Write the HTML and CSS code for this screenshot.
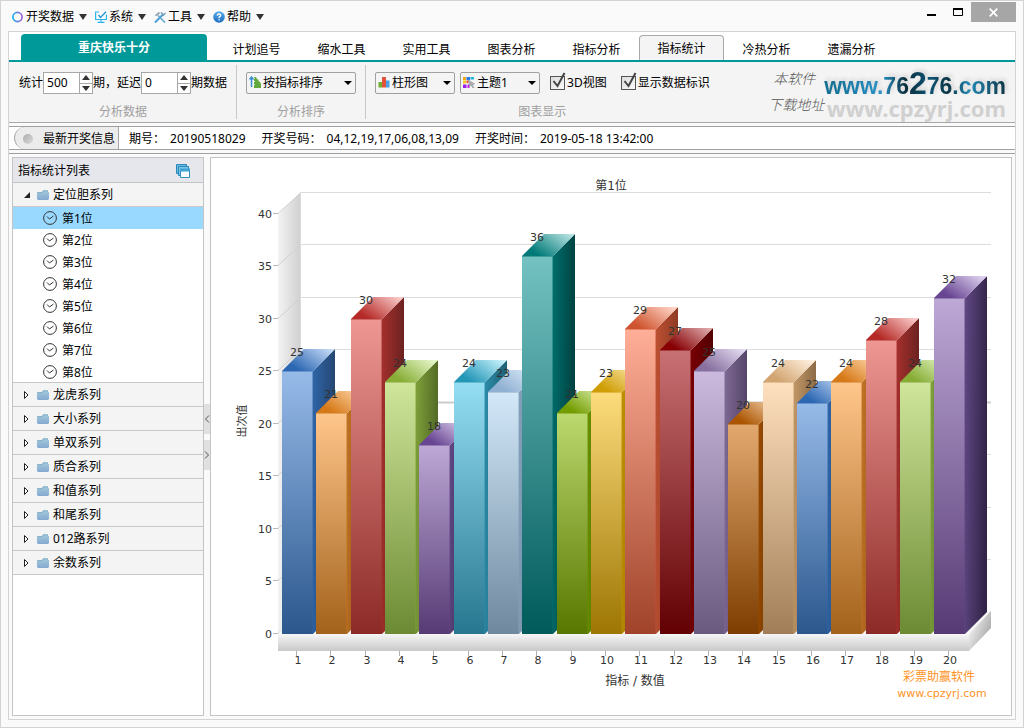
FILE: index.html
```
<!DOCTYPE html>
<html lang="zh-CN">
<head>
<meta charset="utf-8">
<title>重庆快乐十分 - 指标统计</title>
<link rel="stylesheet" href="styles.css">
</head>
<body>
<svg class="defs" width="0" height="0" aria-hidden="true">
  <defs>
    <linearGradient id="ring" x1="0" x2="1"><stop offset="0" stop-color="#1bb0f0"/><stop offset="1" stop-color="#a25cd8"/></linearGradient>
    <linearGradient id="folderFill" x1="0" y1="0" x2="0" y2="1"><stop offset="0" stop-color="#a9cbdc"/><stop offset="1" stop-color="#83a9d0"/></linearGradient>
    <linearGradient id="helpFill" x1="0" y1="0" x2="0" y2="1"><stop offset="0" stop-color="#5aaeea"/><stop offset="1" stop-color="#1c6bc0"/></linearGradient>
    <symbol id="folder" viewBox="0 0 12 10"><path d="M0 2H5L6 0H11V2H12V9L11 10H1L0 9Z" fill="url(#folderFill)"/><path d="M.5 2.500H5.500L6.500 1H11" fill="none" stroke="#7db0c8" stroke-width=".8"/></symbol>
    <symbol id="clock" viewBox="0 0 14 14"><circle cx="7" cy="7" r="6.400" fill="none" stroke="#333" stroke-width="1"/><path d="M4 5.500L6.500 8L10.500 5" fill="none" stroke="#333" stroke-width="1"/></symbol>
  </defs>
</svg>
<div class="window">
  <header class="titlebar">
    <nav class="menu">
      <button class="menu-item" type="button"><svg viewBox="0 0 12 12"><circle cx="5.500" cy="6" r="4.600" fill="none" stroke="url(#ring)" stroke-width="1.700"/></svg>开奖数据<i class="caret"></i></button>
      <button class="menu-item" type="button"><svg viewBox="0 0 12 12"><path d="M4 1H.6v7.500h10.800V3.500M6 8.500V11M2.500 11.300h7" fill="none" stroke="#2db3ee" stroke-width="1.200"/><path d="M3.500 4l2 2.500L11 .8" fill="none" stroke="#2196d6" stroke-width="1.300"/></svg>系统<i class="caret"></i></button>
      <button class="menu-item" type="button"><svg viewBox="0 0 12 12"><path d="M1 11.500L9 3.500" stroke="#4a9fd8" stroke-width="2"/><path d="M7 1.500l2.500 2.500L11.500 2" fill="none" stroke="#7d9cb5" stroke-width="1.500"/><path d="M4 4.500l7 7" stroke="#6aa9d2" stroke-width="1.700"/><path d="M.5 4.500L4.500 1l2 1-3.500 3z" fill="#9aa6b0"/></svg>工具<i class="caret"></i></button>
      <button class="menu-item" type="button"><svg viewBox="0 0 12 12"><circle cx="6" cy="6" r="5.800" fill="url(#helpFill)"/><path d="M4.300 4.700Q4.400 3 6 3t1.700 1.500Q7.700 5.500 6.100 6.200V7.300M6.100 8.300v1.300" fill="none" stroke="#fff" stroke-width="1.300"/></svg>帮助<i class="caret"></i></button>
    </nav>
    <div class="window-buttons">
      <button type="button" aria-label="最小化"><svg width="10" height="10" viewBox="0 0 10 10"><path d="M1 8h9" stroke="#000" stroke-width="2"/></svg></button>
      <button type="button" aria-label="最大化"><svg width="10" height="8" viewBox="0 0 10 8"><path d="M.5 1v6.500h9V1" fill="none" stroke="#000"/><path d="M0 1h10" stroke="#000" stroke-width="2"/></svg></button>
      <button class="close" type="button" aria-label="关闭"><svg width="9" height="9" viewBox="0 0 9 9"><path d="M.7.7l7.600 7.600M8.300.7L.7 8.300" stroke="#fff" stroke-width="1.700"/></svg></button>
    </div>
  </header>
  <main class="frame">
    <nav class="tabs">
      <a class="tab-main" href="#">重庆快乐十分</a>
      <a class="tab" href="#">计划追号</a>
      <a class="tab" href="#">缩水工具</a>
      <a class="tab" href="#">实用工具</a>
      <a class="tab" href="#">图表分析</a>
      <a class="tab" href="#">指标分析</a>
      <a class="tab active" href="#">指标统计</a>
      <a class="tab" href="#">冷热分析</a>
      <a class="tab" href="#">遗漏分析</a>
    </nav>
    <section class="ribbon">
      <div class="group">
        <div class="controls tight">
          <label for="count">统计</label>
          <span class="spinner"><input id="count" type="text" value="500"><span class="steps"><button type="button" aria-label="增加"><i class="up"></i></button><button type="button" aria-label="减少"><i class="down"></i></button></span></span>
          <label for="delay">期，延迟</label>
          <span class="spinner"><input id="delay" type="text" value="0"><span class="steps"><button type="button" aria-label="增加"><i class="up"></i></button><button type="button" aria-label="减少"><i class="down"></i></button></span></span>
          <span>期数据</span>
        </div>
        <div class="caption">分析数据</div>
      </div>
      <div class="group">
        <div class="controls">
          <span class="combo wide"><svg viewBox="0 0 12 12"><path d="M2.500 11V2M.5 3.500L2.500 1l2 2.500" fill="none" stroke="#3a8fd0" stroke-width="1.500"/><path d="M5 1h2l1 2.200h1L10 5.800h1L12 8.600V12H5V8.800h1V8H5V6h1V5H5V3h1z" fill="#62a83a"/></svg>
            <select aria-label="排序"><option>按指标排序</option></select></span>
        </div>
        <div class="caption">分析排序</div>
      </div>
      <div class="group last">
        <div class="controls">
          <span class="combo"><svg viewBox="0 0 12 12"><path d="M.5 6H4v5.500H.5z" fill="#6fae2e"/><path d="M4 1h4v10.500H4z" fill="#e2543a"/><path d="M8 4.500h3.500v7H8z" fill="#4aa0e6"/></svg>
            <select aria-label="图表类型"><option>柱形图</option></select></span>
          <span class="combo"><svg viewBox="0 0 12 12"><path d="M0 1h3v3H0z" fill="#f5a51c"/><path d="M3.500 1h3.500v3H3.500z" fill="#2a7de8"/><path d="M7.500 1H11v2.500H7.500z" fill="#25b7d8"/><path d="M0 4.500h3v3H0z" fill="#f4d11c"/><path d="M0 8.500h3.500V12H0z" fill="#9a20e8"/><path d="M3.500 4.500h2v2.500h-2z" fill="#f04a30"/><path d="M4.500 8.500h2V12h-2z" fill="#c020e0"/><path d="M5.500 4l6 4-2.500.5 2 3-1 .5-2-3-1.500 1.500z" fill="#aab0b6" stroke="#888" stroke-width=".5"/></svg>
            <select aria-label="主题"><option>主题1</option></select></span>
          <label class="check"><input type="checkbox" checked><svg viewBox="0 0 16 18"><path d="M3.500 9l4 5L14.500 1" fill="none" stroke="#444" stroke-width="2"/></svg>3D视图</label>
          <label class="check"><input type="checkbox" checked><svg viewBox="0 0 16 18"><path d="M3.500 9l4 5L14.500 1" fill="none" stroke="#444" stroke-width="2"/></svg>显示数据标识</label>
        </div>
        <div class="caption">图表显示</div>
      </div>
      <div class="site">
        <div class="brush"><span>本软件</span><span>下载地址</span></div>
        <div class="urls"><strong class="url-main">www.76<b>2</b>76.com</strong><span class="url-sub">www.cpzyrj.com</span></div>
      </div>
    </section>
    <section class="info">
      <div class="info-title"><i class="lamp"></i>最新开奖信息</div>
      <span>期号：<span class="value">20190518029</span></span>
      <span>开奖号码：<span class="value">04,12,19,17,06,08,13,09</span></span>
      <span>开奖时间：<span class="value">2019-05-18 13:42:00</span></span>
    </section>
    <div class="workspace">
      <aside class="side">
        <div class="side-head">指标统计列表
          <svg width="14" height="14" viewBox="0 0 14 14"><path d="M.5.500h10v9H.5z" fill="#6bbbe0" stroke="#2a88bb"/><path d="M2.500 2.500h10v9h-10z" fill="#7cc6e6" stroke="#2a88bb"/><path d="M4.500 5.500h9v8h-9z" fill="#f8fcff" stroke="#2f8fc2"/><path d="M4 4.500h10v3H4z" fill="#3ea2d2"/></svg>
        </div>
        <button class="row" type="button"><svg class="tri" viewBox="0 0 8 8"><path d="M7 1v6H1z" fill="#222"/></svg><svg class="folder"><use href="#folder"/></svg>定位胆系列</button>
        <div class="leaves">
          <a class="leaf selected" href="#"><svg><use href="#clock"/></svg>第1位</a>
          <a class="leaf" href="#"><svg><use href="#clock"/></svg>第2位</a>
          <a class="leaf" href="#"><svg><use href="#clock"/></svg>第3位</a>
          <a class="leaf" href="#"><svg><use href="#clock"/></svg>第4位</a>
          <a class="leaf" href="#"><svg><use href="#clock"/></svg>第5位</a>
          <a class="leaf" href="#"><svg><use href="#clock"/></svg>第6位</a>
          <a class="leaf" href="#"><svg><use href="#clock"/></svg>第7位</a>
          <a class="leaf" href="#"><svg><use href="#clock"/></svg>第8位</a>
        </div>
        <button class="row" type="button"><svg class="tri" viewBox="0 0 8 8"><path d="M1.500 .5v7L5 4z" fill="#fff" stroke="#222"/></svg><svg class="folder"><use href="#folder"/></svg>龙虎系列</button>
        <button class="row" type="button"><svg class="tri" viewBox="0 0 8 8"><path d="M1.500 .5v7L5 4z" fill="#fff" stroke="#222"/></svg><svg class="folder"><use href="#folder"/></svg>大小系列</button>
        <button class="row" type="button"><svg class="tri" viewBox="0 0 8 8"><path d="M1.500 .5v7L5 4z" fill="#fff" stroke="#222"/></svg><svg class="folder"><use href="#folder"/></svg>单双系列</button>
        <button class="row" type="button"><svg class="tri" viewBox="0 0 8 8"><path d="M1.500 .5v7L5 4z" fill="#fff" stroke="#222"/></svg><svg class="folder"><use href="#folder"/></svg>质合系列</button>
        <button class="row" type="button"><svg class="tri" viewBox="0 0 8 8"><path d="M1.500 .5v7L5 4z" fill="#fff" stroke="#222"/></svg><svg class="folder"><use href="#folder"/></svg>和值系列</button>
        <button class="row" type="button"><svg class="tri" viewBox="0 0 8 8"><path d="M1.500 .5v7L5 4z" fill="#fff" stroke="#222"/></svg><svg class="folder"><use href="#folder"/></svg>和尾系列</button>
        <button class="row" type="button"><svg class="tri" viewBox="0 0 8 8"><path d="M1.500 .5v7L5 4z" fill="#fff" stroke="#222"/></svg><svg class="folder"><use href="#folder"/></svg>012路系列</button>
        <button class="row" type="button"><svg class="tri" viewBox="0 0 8 8"><path d="M1.500 .5v7L5 4z" fill="#fff" stroke="#222"/></svg><svg class="folder"><use href="#folder"/></svg>余数系列</button>
      </aside>
      <div class="splitter">
        <button type="button" aria-label="收起"><svg width="6" height="8" viewBox="0 0 6 8"><path d="M5 .5L1.500 4L5 7.500" fill="none" stroke="#555"/></svg></button>
        <button type="button" aria-label="展开"><svg width="6" height="8" viewBox="0 0 6 8"><path d="M1 .5L4.500 4L1 7.500" fill="none" stroke="#555"/></svg></button>
      </div>
      <section class="panel">
        <svg id="chart" class="chart" viewBox="0 0 800 557" role="img" aria-label="第1位"></svg>
      </section>
    </div>
  </main>
</div>
<script src="chart.js"></script>
</body>
</html>
```
FILE: styles.css
```
* { box-sizing: border-box; }
body {
  margin: 0;
  font: 12px/16px "Noto Sans", "Noto Sans CJK SC", sans-serif;
  color: #000;
}
button, input, select { font: inherit; color: inherit; margin: 0; padding: 0; }
button { background: none; border: 0; }
a { color: inherit; text-decoration: none; }
.defs { position: absolute; }

.window {
  display: flex;
  flex-direction: column;
  min-height: 100vh;
  padding: 0 7px 7px;
  border: 1px solid #d3d3d3;
  background: #fafafa;
}
.titlebar { display: flex; justify-content: space-between; height: 30px; }
.menu { display: flex; gap: 8px; padding: 2px 0 0 4px; align-items: center; }
.menu-item { display: flex; align-items: center; gap: 2px; }
.menu-item svg { width: 12px; height: 12px; }
.caret {
  margin-left: 3px;
  border: 4px solid transparent;
  border-top: 6px solid #333;
  border-bottom: 0;
}
.window-buttons { display: flex; align-items: flex-start; }
.window-buttons button { display: flex; align-items: center; justify-content: center; width: 27px; height: 22px; }
.window-buttons .close { width: 45px; height: 20px; margin: 1px 0 0; background: #a6a6a6; }

.frame {
  flex: 1;
  display: flex;
  flex-direction: column;
  border: 1px solid #d3d3d3;
  background: #fafafa;
}
.tabs {
  display: flex;
  align-items: flex-end;
  height: 30px;
  padding-left: 12px;
  background: #fff;
  border-bottom: 2px solid #009999;
}
.tab-main {
  width: 186px;
  margin-right: 7px;
  padding-top: 2px;
  line-height: 24px;
  text-align: center;
  font-weight: bold;
  color: #fff;
  background: #009999;
  border-radius: 4px 4px 0 0;
}
.tab { width: 85px; line-height: 20px; text-align: center; border: 1px solid transparent; border-bottom: 0; }
.tab.active { padding-top: 2px; line-height: 22px; background: #f4f4f4; border-color: #a8a8a8; border-radius: 4px 4px 0 0; }

.ribbon { display: flex; height: 61px; padding: 3px 0; background: #f4f4f4; border-bottom: 1px solid #a8a8a8; }
.group { display: flex; flex-direction: column; padding: 7px 9px 0; border-right: 1px solid #c8c8c8; }
.group:first-child { padding-left: 10px; }
.group.last { border: 0; }
.controls { display: flex; align-items: center; gap: 5px; height: 22px; }
.controls.tight { gap: 0; }
.caption { margin-top: 10px; text-align: center; color: #a0a0a0; }
.spinner { display: flex; width: 50px; height: 22px; background: #fff; border: 1px solid #a8a8a8; }
.spinner input { flex: 1; min-width: 0; padding-left: 3px; border: 0; outline: 0; }
.steps { display: flex; flex-direction: column; width: 13px; border-left: 1px solid #a8a8a8; }
.steps button { flex: 1; display: flex; align-items: center; justify-content: center; }
.steps button + button { border-top: 1px solid #a8a8a8; }
.up, .down { border: 4px solid transparent; }
.up { border-bottom: 5px solid #333; border-top: 0; }
.down { border-top: 5px solid #333; border-bottom: 0; }
.combo { position: relative; display: flex; width: 80px; height: 22px; }
.combo.wide { width: 110px; }
.combo svg { position: absolute; left: 3px; top: 4px; width: 12px; height: 12px; }
.combo::after {
  content: "";
  position: absolute;
  right: 4px;
  top: 9px;
  border: 4px solid transparent;
  border-top-color: #000;
  border-bottom: 0;
  pointer-events: none;
}
.combo select {
  width: 100%;
  padding: 0 12px 0 16px;
  appearance: none;
  background: #f4f4f4;
  border: 1px solid #a0a0a0;
  border-radius: 2px;
}
.check { position: relative; display: flex; align-items: center; gap: 2px; margin-left: 5px; }
.check + .check { margin-left: 9px; }
.check input { appearance: none; width: 15px; height: 14px; border: 1px solid #555; background: linear-gradient(135deg, #dcdcdc, #fafafa); }
.check svg { position: absolute; left: 0; top: -3px; width: 16px; height: 18px; }

.site { display: flex; margin-left: auto; padding-right: 9px; }
.brush {
  display: flex;
  flex-direction: column;
  font: italic 300 14px/26px "Noto Sans CJK SC", serif;
  color: #555;
}
.brush span:first-child { padding-left: 5px; }
.urls { display: flex; flex-direction: column; align-items: flex-end; font-family: "Liberation Sans", sans-serif; }
.url-main {
  font-size: 23px;
  line-height: 36px;
  color: transparent;
  background: linear-gradient(90deg, #14708f, #1d7fae 18%, #2a93c4 32%, #0a2c3a 45%, #0d5575 58%, #0a3344 68%, #2388b4 80%, #0c3446);
  background-clip: text;
  filter: drop-shadow(2px -2px 2px #d0d0d0);
}
.url-main b { font-size: 32px; }
.url-sub { font: bold 22px/8px "Noto Sans", sans-serif; color: #d0d0d0; }

.info {
  display: flex;
  align-items: center;
  gap: 16px;
  height: 24px;
  margin-top: 3px;
  border-top: 1px solid #a0a0a0;
  border-bottom: 1px solid #a0a0a0;
  background: #fff;
}
.info > span { padding-top: 1px; }
.value { margin-left: 5px; }
.info-title {
  display: flex;
  align-items: center;
  align-self: stretch;
  gap: 10px;
  margin: 0 -6px 0 5px;
  padding: 1px 3px 0 8px;
  background: #ececec;
  border: 1px solid #a8a8a8;
  border-width: 0 1px;
  border-radius: 11px 0 0 11px;
}
.lamp { width: 10px; height: 10px; border-radius: 50%; background: linear-gradient(135deg, #aaa, #ddd); }

.workspace { flex: 1; display: flex; margin-top: 3px; padding: 3px; border-top: 1px solid #a0a0a0; }
.side { width: 192px; background: #fff; border: 1px solid #c4c4c4; }
.side-head {
  display: flex;
  align-items: center;
  justify-content: space-between;
  height: 25px;
  padding: 1px 13px 0 5px;
  background: #e6e7ec;
  border-bottom: 1px solid #c4c4c4;
}
.row {
  display: flex;
  align-items: center;
  width: 100%;
  height: 24px;
  padding-left: 10px;
  background: #f4f4f4;
  border-bottom: 1px solid #c8c8c8;
}
.tri { width: 8px; height: 8px; margin-right: 6px; }
.folder { width: 12px; height: 10px; margin-right: 4px; }
.leaves { height: 176px; border-bottom: 1px solid #c8c8c8; }
.leaf { display: flex; align-items: center; gap: 5px; height: 22px; padding: 2px 0 0 30px; }
.leaf svg { width: 14px; height: 14px; margin-bottom: 2px; }
.leaf.selected { background: #99d9ff; }
.splitter { display: flex; flex-direction: column; justify-content: center; gap: 6px; width: 6px; }
.splitter button { height: 30px; background: #e0e0e0; line-height: 8px; }
.panel { flex: 1; min-width: 0; display: flex; background: #fff; border: 1px solid #c4c4c4; }
.chart { flex: 1; min-width: 0; font: 11px "DejaVu Sans", "Noto Sans CJK SC", sans-serif; fill: #333; }
.chart .title, .chart .axis { font-size: 12px; }
.chart .brand { font-size: 12px; fill: #ff9326; }
.chart .brand-url { font-size: 11px; fill: #ff9326; }
```
FILE: chart.js
```
const values = [25, 21, 30, 24, 18, 24, 23, 36, 21, 23, 29, 27, 25, 20, 24, 22, 24, 28, 24, 32];

// front top, front bottom, side near, side far, lid near, lid far
const palette = [
  ['#97bbe9', '#2b578d', '#2f65a8', '#254670', '#2c67b3', '#c3d8f5'],
  ['#ffc68b', '#a3621b', '#c27424', '#7f4813', '#d67a19', '#ffd9ae'],
  ['#ee9793', '#8c2a27', '#a5302d', '#6a2220', '#b52a28', '#f9c9c7'],
  ['#cfe69b', '#6c8a33', '#7fa03a', '#526a25', '#87ad35', '#e4f5c6'],
  ['#bda8d6', '#563a74', '#614884', '#33254a', '#684593', '#ddd0ee'],
  ['#95def3', '#26778f', '#2b8ca8', '#1f6075', '#2497b7', '#c4f0fb'],
  ['#d3e9fa', '#6f889e', '#86a1bb', '#637a90', '#8fb0d2', '#dcebf8'],
  ['#74c2c2', '#005a5a', '#006e6c', '#004241', '#007a78', '#b6e2e1'],
  ['#bbd96e', '#587700', '#6a9000', '#4b6600', '#739c00', '#dcefae'],
  ['#fddc7c', '#9d7603', '#be9003', '#8a6802', '#cf9d05', '#fbe7a8'],
  ['#ffae97', '#a0432a', '#be5032', '#8c3a24', '#cf5530', '#ffd3c5'],
  ['#c87174', '#620003', '#780003', '#520002', '#860004', '#dca5a6'],
  ['#cbbadd', '#6b5a80', '#7f6996', '#544567', '#87709f', '#e3daf0'],
  ['#e2a96f', '#7e3d00', '#994b00', '#642f00', '#ac5500', '#f0cda8'],
  ['#ffe0be', '#a17e57', '#c19767', '#8a6a45', '#d1a470', '#ffefdd']
];

const base = 476, unit = 10.5, depth = 22, barWidth = 31, step = 34.33;
const out = [];
const line = (x1, y1, x2, y2, color, width = 1) =>
  out.push(`<path d="M${x1} ${y1}L${x2} ${y2}" stroke="${color}" stroke-width="${width}" fill="none"/>`);
const text = (x, y, value, anchor = 'middle', extra = '') =>
  out.push(`<text x="${x}" y="${y}" text-anchor="${anchor}" ${extra}>${value}</text>`);
const gradient = (id, from, to, vector) =>
  `<linearGradient id="${id}" ${vector}><stop offset="0" stop-color="${from}"/><stop offset="1" stop-color="${to}"/></linearGradient>`;

out.push('<defs>');
palette.forEach((c, i) => out.push(
  gradient('front' + i, c[0], c[1], 'x1="0" y1="0" x2="0" y2="1"'),
  gradient('side' + i, c[2], c[3], 'x1="0" y1="0" x2="1" y2="0.2"'),
  gradient('lid' + i, c[4], c[5], 'x1="0.1" y1="0.6" x2="0.95" y2="0.1"')));
out.push(
  gradient('wall', '#f3f3f3', '#cfcfcf', 'x1="0" y1="0" x2="1" y2="0"'),
  gradient('floor', '#f6f6f6', '#c8c8c8', 'x1="0" y1="0" x2="0" y2="1"'),
  gradient('floorSide', '#ededed', '#a8a8a8', 'x1="0.2" y1="0.2" x2="0.9" y2="0.7"'),
  '</defs>');

// walls, floor and grid
out.push('<path d="M67 56L90 34V454L67 476z" fill="url(#wall)"/>');
for (let v = 0; v <= 40; v += 5) {
  const y = Math.floor(base - v * unit) - 0.5;
  const back = Math.floor(base - 21 - v * unit) - 0.5;
  line(62, y, 67, y, '#b8b8b8');
  line(67, y, 90, back, '#d0d0d0');
  line(90, back, 780, back, v === 20 ? '#cccccc' : '#dcdcdc', v === 20 ? 2 : 1);
  text(61, y + 4, v, 'end');
}
line(89.5, 34, 89.5, 454, '#dcdcdc');
out.push('<path d="M67 476H758L780 453H90z" fill="#f6f6f6"/>');
out.push('<path d="M67 476H758V493H67z" fill="url(#floor)"/>');
out.push('<path d="M758 476L780 453V470L758 493z" fill="url(#floorSide)"/>');

// bars
values.forEach((v, i) => {
  const x = Math.round(71 + i * step), r = x + barWidth;
  const y = Math.floor(base - v * unit), c = i % 15;
  out.push(
    `<path d="M${r} ${y}l${depth} -${depth}V${base - depth}L${r} ${base}z" fill="url(#side${c})"/>`,
    `<path d="M${x} ${y}l${depth} -${depth}h${barWidth}l-${depth} ${depth}z" fill="url(#lid${c})"/>`,
    `<path d="M${x} ${y}h${barWidth}V${base}H${x}z" fill="url(#front${c})"/>`,
    `<path d="M${x} ${y + 0.5}H${r - 0.5}V${base}" fill="none" stroke="${palette[c][2]}" stroke-opacity=".45"/>`);
});

// labels
values.forEach((v, i) => {
  const x = Math.round(71 + i * step) + 15;
  text(x, Math.floor(base - v * unit) - 15, v);
  line(x - 0.5, 493, x - 0.5, 498, '#b0b0b0');
  text(x + 1, 506, i + 1);
});
text(400, 32, '第1位', 'middle', 'class="title"');
text(424, 527, '指标 / 数值', 'middle', 'class="axis"');
text(0, 0, '出次值', 'middle', 'transform="translate(35 263) rotate(-90)"');
text(728, 523, '彩票助赢软件', 'middle', 'class="brand"');
text(731, 539, 'www.cpzyrj.com', 'middle', 'class="brand-url"');

document.getElementById('chart').innerHTML = out.join('');
```
